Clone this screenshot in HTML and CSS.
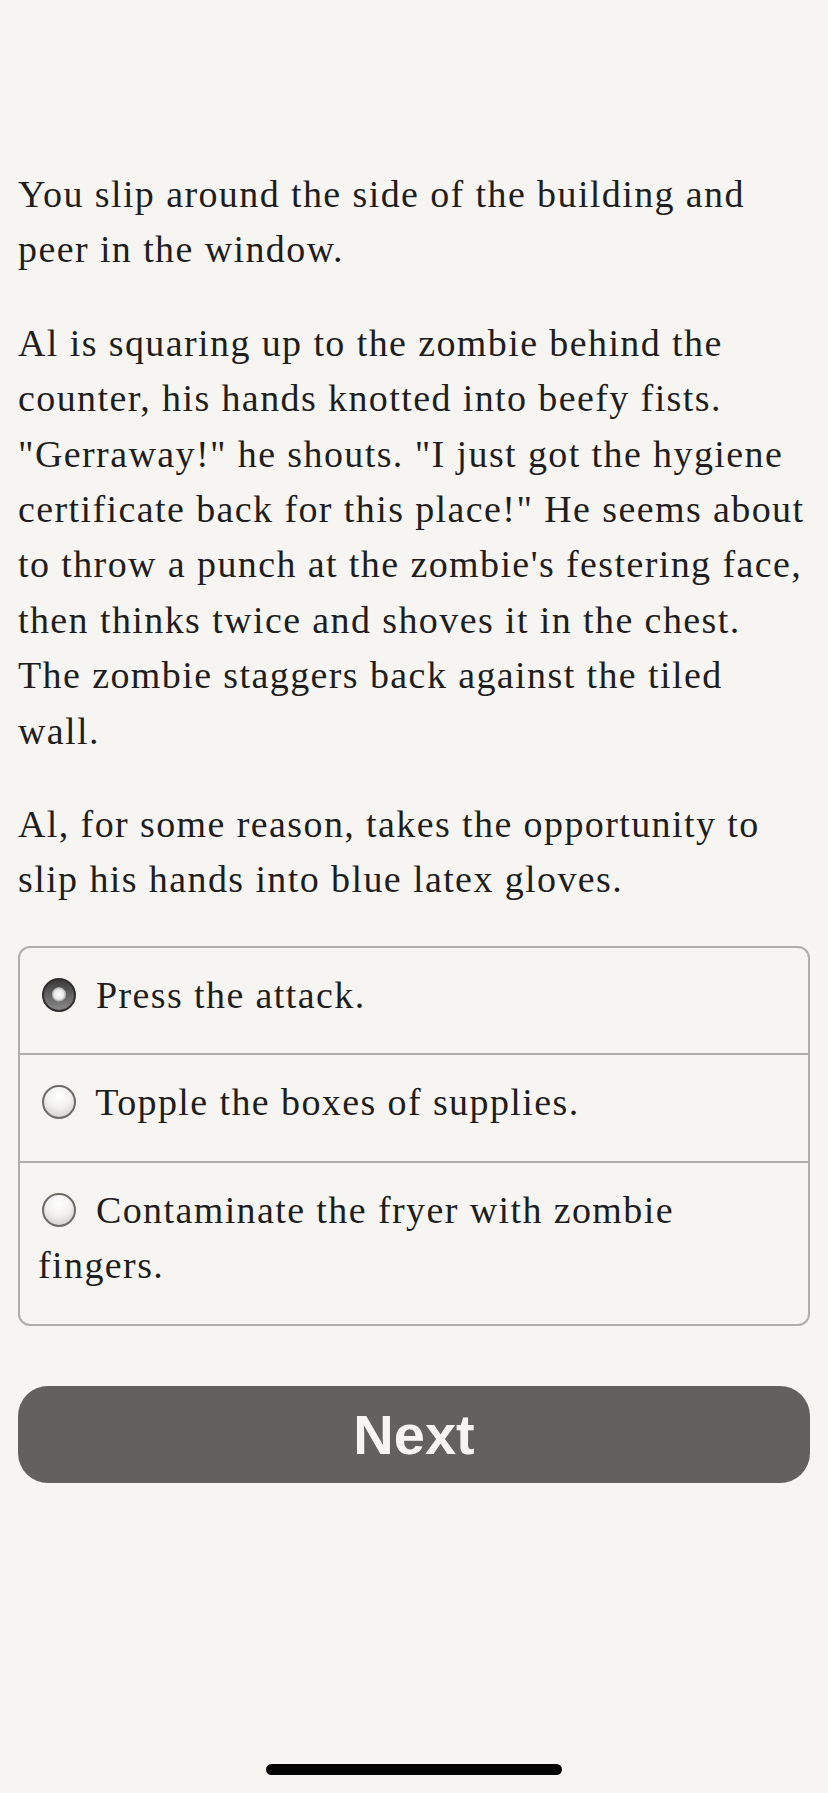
FILE: index.html
```html
<!DOCTYPE html>
<html lang="en">
<head>
    <meta charset="UTF-8">
    <meta name="viewport" content="width=device-width, initial-scale=1.0">
    <title>Story</title>
    <link rel="stylesheet" href="styles.css">
</head>
<body>
    <main class="page">
        <div class="story">
            <p>You slip around the side of the building and peer in the window.</p>
            <p>Al is squaring up to the zombie behind the counter, his hands knotted into beefy fists. "Gerraway!" he shouts. "I just got the hygiene certificate back for this place!" He seems about to throw a punch at the zombie's festering face, then thinks twice and shoves it in the chest. The zombie staggers back against the tiled wall.</p>
            <p>Al, for some reason, takes the opportunity to slip his hands into blue latex gloves.</p>
        </div>

        <form class="choices">
            <label class="choice"><input type="radio" name="choice" checked> Press the attack.</label>
            <label class="choice"><input type="radio" name="choice"> Topple the boxes of supplies.</label>
            <label class="choice"><input type="radio" name="choice"> Contaminate the fryer with zombie fingers.</label>
        </form>

        <button class="next-button" type="button">Next</button>
    </main>
    <div class="home-indicator"></div>
</body>
</html>
```

FILE: styles.css
```css
/* General Styling */
body {
    margin: 0;
    padding: 0;
    background: #f7f5f2;
    color: #1e1e1e;
    font-family: 'Liberation Serif', 'Times New Roman', serif;
    font-size: 38px;
    letter-spacing: 1.4px;
    line-height: 55.4px;
    min-height: 100vh;
}

.page {
    padding: 167px 18px 0 18px;
}

/* Story text */
.story p {
    margin: 0 0 38px 0;
}

/* Choices box */
.choices {
    margin: 38px 0 0 0;
    border: 2px solid #b0aeab;
    border-radius: 12px;
    overflow: hidden;
}

.choice {
    display: block;
    padding: 20px 18px 30px 18px;
    border-top: 2px solid #b0aeab;
}

.choice:first-child {
    border-top: none;
}

.choice input {
    appearance: none;
    -webkit-appearance: none;
    width: 34px;
    height: 34px;
    margin: 0 9px 0 4px;
    border-radius: 50%;
    vertical-align: -4px;
    box-sizing: border-box;
    border: 2px solid #6d6b69;
    background: radial-gradient(circle at 50% 30%, #ffffff 0%, #f2f1f0 45%, #c9c7c5 100%);
}

.choice input:checked {
    border: 2px solid #2e2e2e;
    background:
        radial-gradient(circle at 50% 48%, #ffffff 0, #e6e6e6 5px, #9a9a9a 7px, transparent 7.5px),
        linear-gradient(#3a3a3a, #8a8a8a);
}

/* Next button */
.next-button {
    display: block;
    width: 100%;
    height: 97px;
    margin-top: 60px;
    border: none;
    border-radius: 30px;
    background: #636160;
    color: #f7f5f2;
    font-family: 'Liberation Sans', Arial, sans-serif;
    font-size: 56px;
    font-weight: bold;
    letter-spacing: 0;
    padding: 0;
}

/* Home indicator */
.home-indicator {
    position: fixed;
    left: 266px;
    bottom: 18px;
    width: 296px;
    height: 11px;
    border-radius: 6px;
    background: #050505;
}
```
